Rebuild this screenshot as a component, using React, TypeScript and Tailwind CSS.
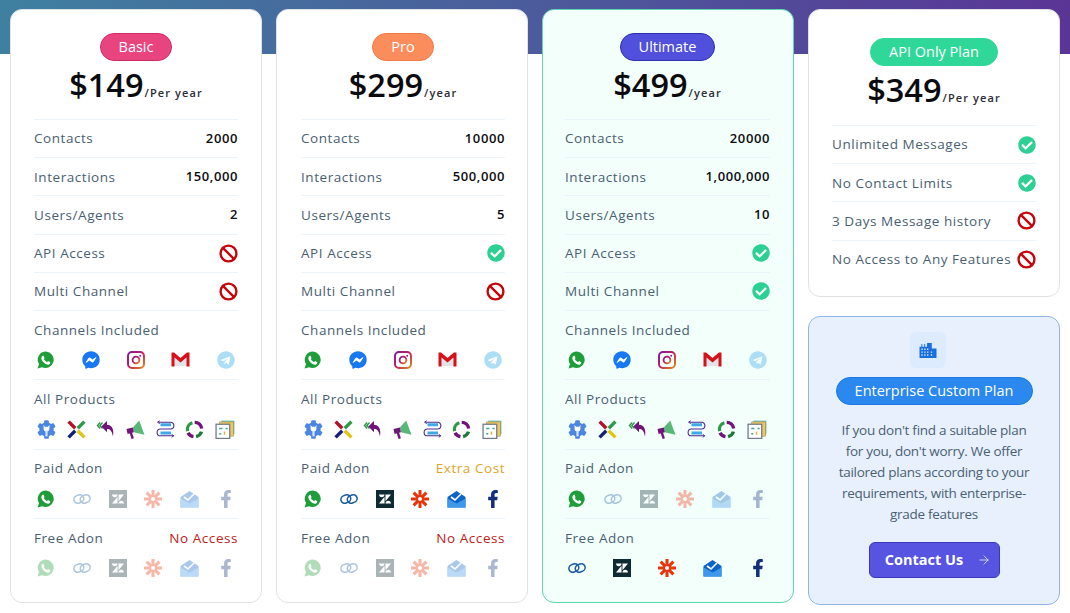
import React from "react";
import { Ban, ArrowRight } from "lucide-react";
import { FaFacebookMessenger, FaTelegram, FaFacebookF, FaCheckCircle } from "react-icons/fa";
import { SiZendesk } from "react-icons/si";

type Row = { label: string; value?: string; state?: "yes" | "no" };

const Yes = () => <FaCheckCircle className="text-[#2dd093] text-[18px]" />;
const No = () => <Ban size={19} strokeWidth={3} className="text-[#c4060c]" />;

const Whatsapp = () => (
  <svg width="18" height="18" viewBox="0 0 18 18">
    <path d="M9 .6a8.2 8.2 0 0 0-7 12.5L.6 17.4l4.4-1.2A8.2 8.2 0 1 0 9 .6z" fill="#1f9d3a" />
    <path d="M6.4 4.6l-1 .3c-.8.6-1.2 1.6-1 2.9.4 2.4 3.1 5.2 5.8 5.8 1.2.2 2.3-.3 2.9-1.2l.2-1.2-2.3-1.1-.9 1.1c-1.3-.5-2.7-1.8-3.3-3.1l.8-.9-1.2-2.6z" fill="#fff" />
  </svg>
);
const Messenger = () => <FaFacebookMessenger className="text-[#1877f2] text-[18px]" />;
const Instagram = () => (
  <svg width="18" height="18" viewBox="0 0 18 18" fill="none">
    <defs>
      <linearGradient id="ig" x1="0" y1="0" x2="1" y2="1">
        <stop offset="0" stopColor="#7a1fa0" />
        <stop offset="0.5" stopColor="#c02060" />
        <stop offset="1" stopColor="#e09020" />
      </linearGradient>
    </defs>
    <rect x="1" y="1" width="16" height="16" rx="4" stroke="url(#ig)" strokeWidth="2" />
    <circle cx="9" cy="9" r="3.4" stroke="url(#ig)" strokeWidth="1.8" />
    <circle cx="13.2" cy="4.8" r="1" fill="#a02080" />
  </svg>
);
const Gmail = () => (
  <svg width="19" height="15" viewBox="0 0 19 15">
    <path d="M3 5l6.5 5L16 5v9H3z" fill="#e4e4e8" />
    <path d="M0.5 0.5h2.6L9.5 6l6.4-5.5h2.6V14.5h-3V5.6L9.5 10.4 3.5 5.6V14.5h-3z" fill="#d3121a" />
  </svg>
);
const Telegram = () => <FaTelegram className="text-[#aeddf6] text-[18px]" />;

const Gear = () => (
  <svg width="19" height="19" viewBox="0 0 18 18">
    <g fill="#4a86e2">
      <circle cx="9" cy="9" r="6.8" />
      <rect x="6.8" y="0.2" width="4.4" height="17.6" rx="1" />
      <rect x="6.8" y="0.2" width="4.4" height="17.6" rx="1" transform="rotate(60 9 9)" />
      <rect x="6.8" y="0.2" width="4.4" height="17.6" rx="1" transform="rotate(120 9 9)" />
    </g>
    <path d="M6.2 4.8v3.2a2.8 2.8 0 0 0 5.6 0V4.8l-1.4 1.7H7.6z" fill="#fff" />
    <rect x="8" y="10" width="2" height="5.5" fill="#dbe8fb" />
  </svg>
);
const Cross = () => (
  <svg width="19" height="19" viewBox="0 0 18 18" strokeWidth="3.2">
    <path d="M1.5 1.5l6.3 6.3" stroke="#b3102c" />
    <path d="M16.5 1.5l-6.3 6.3" stroke="#2e9a48" />
    <path d="M1.5 16.5l6.3-6.3" stroke="#141f78" />
    <path d="M16.5 16.5l-6.3-6.3" stroke="#e2c414" />
  </svg>
);
const Reply = () => (
  <svg width="19" height="18" viewBox="0 0 18 18">
    <path d="M3.6 2.5L1 5.5l2.6 3M6 2.5L3.4 5.5 6 8.5" fill="none" stroke="#2e9a48" strokeWidth="1.4" />
    <path d="M10.5 1L4.8 6.6l5.7 5.6V9c3 0 4.8 1.6 6 7.5 1.2-6.5-.6-11.7-6-11.7z" fill="#70147c" />
  </svg>
);
const Megaphone = () => (
  <svg width="19" height="19" viewBox="0 0 18 18">
    <path d="M12.5 0.5l5 13.5-10-2.5-1-4.5z" fill="#58b878" />
    <path d="M0.5 8.5l6-1.5 1 4.5-6 1.8z" fill="#70147c" />
    <path d="M3.5 12.5l2.2-.6 1.8 5.4-2.2.6z" fill="#70147c" />
  </svg>
);
const Flow = () => (
  <svg width="19" height="18" viewBox="0 0 18 18" fill="none">
    <path d="M4 4.8h10.5M4 13h10.5" stroke="#41a8e6" strokeWidth="3" />
    <path d="M2 2.2H14a3.4 3.4 0 0 1 0 6.8H4a3.4 3.4 0 0 0 0 6.8h12.5" stroke="#4e2a90" strokeWidth="1.1" />
    <path d="M3.2 0.8L1 2.2l2.2 1.4M15.2 14.4l2.2 1.4-2.2 1.4" stroke="#4e2a90" strokeWidth="1" />
  </svg>
);
const Cycle = () => (
  <svg width="19" height="19" viewBox="0 0 18 18" fill="none" strokeWidth="3.2">
    <path d="M2.4 10.5A6.8 6.8 0 0 1 7 2.6" stroke="#2e9a48" />
    <path d="M9.2 2.2A6.8 6.8 0 0 1 15.8 8" stroke="#70147c" />
    <path d="M15.6 11A6.8 6.8 0 0 1 10.5 15.7" stroke="#1d7a3a" />
    <path d="M8 15.8A6.8 6.8 0 0 1 2.9 12" stroke="#70147c" />
  </svg>
);
const Stack = () => (
  <svg width="20" height="19" viewBox="0 0 19 18">
    <rect x="6" y="0.5" width="12.5" height="13" fill="#7fc8b8" />
    <rect x="4.5" y="1.8" width="13" height="13.5" fill="#f0c860" stroke="#8a7a40" strokeWidth="0.5" />
    <rect x="1" y="4" width="13" height="13.5" fill="#fff" stroke="#70788a" strokeWidth="1.2" />
    <path d="M4 8h3M10 8h2M4 13h2" stroke="#38a8a0" strokeWidth="1.4" />
    <path d="M9 11v3" stroke="#d8b830" strokeWidth="1.4" />
  </svg>
);

const Zoho = () => (
  <svg width="18" height="18" viewBox="0 0 18 18" fill="none" stroke="#1c5c9c" strokeWidth="1.5">
    <rect x="0.8" y="5.2" width="10" height="7.6" rx="3.8" transform="rotate(-22 5.8 9)" />
    <rect x="7.2" y="5.2" width="10" height="7.6" rx="3.8" transform="rotate(-22 12.2 9)" />
  </svg>
);
const Zendesk = () => (
  <span className="flex h-[18px] w-[18px] items-center justify-center bg-[#0f2a33]">
    <SiZendesk className="text-white text-[12px]" />
  </span>
);
const Zapier = () => (
  <svg width="18" height="18" viewBox="0 0 18 18" stroke="#e8340a" strokeWidth="3">
    <path d="M9 0v5.5M9 12.5V18M0 9h5.5M12.5 9H18M2.6 2.6l4 4M11.4 11.4l4 4M15.4 2.6l-4 4M6.6 11.4l-4 4" />
    <circle cx="9" cy="9" r="3" fill="none" strokeWidth="2" />
  </svg>
);
const Mail = () => (
  <svg width="19" height="18" viewBox="0 0 19 18">
    <path d="M0.5 7L9.5 1l9 6v10.5H0.5z" fill="#0c63c8" />
    <path d="M4 7l4 3 6-6" fill="none" stroke="#fff" strokeWidth="1.6" />
    <path d="M0.5 8.5l9 5 9-5v9H0.5z" fill="#3f97ea" />
  </svg>
);
const Facebook = () => <FaFacebookF className="text-[#12307a] text-[18px]" />;

const channels = [Whatsapp, Messenger, Instagram, Gmail, Telegram];
const products = [Gear, Cross, Reply, Megaphone, Flow, Cycle, Stack];
const adons = [Whatsapp, Zoho, Zendesk, Zapier, Mail, Facebook];

const Plan = ({ name, badge, price, per, rows, paidNote, paidOn, freeNote, freeIcons, freeOn, card }: {
  name: string;
  badge: string;
  price: string;
  per: string;
  rows: Row[];
  paidNote?: string;
  paidOn: boolean[];
  freeNote?: string;
  freeIcons: React.FC[];
  freeOn: boolean;
  card: string;
}) => (
  <div className={"h-[594px] rounded-xl border pt-[23px] " + card}>
    <Head name={name} badge={badge} price={price} per={per} />
    <div className="h-[12px]" />
    {rows.map((r) => <PlanRow key={r.label} row={r} />)}
    <Block label="Channels Included" icons={channels} />
    <Block label="All Products" icons={products} />
    <Block label="Paid Adon" note={paidNote} noteClass="text-[#e0a526]" icons={adons} on={paidOn} />
    <Block label="Free Adon" note={freeNote} noteClass="text-[#c0201a]" icons={freeIcons} on={freeIcons.map(() => freeOn)} last />
  </div>
);

const Head = ({ name, badge, price, per }: { name: string; badge: string; price: string; per: string }) => (
  <div className="flex flex-col items-center">
    <span className={"flex h-[28px] items-center rounded-full border px-[18px] text-[14.5px] font-medium text-white " + badge}>{name}</span>
    <div className="mt-px flex h-[45px] items-baseline text-[#0b0b0f]">
      <span className="text-[32.5px] font-[550] leading-[45px]">{price}</span>
      <span className="ml-px text-[11px] font-semibold tracking-[1.1px] text-[#2c2c34]">{per}</span>
    </div>
  </div>
);

const PlanRow = ({ row }: { row: Row }) => (
  <div className="flex h-[38.2px] items-center justify-between border-t border-[#ebf4fb]">
    <span className="text-[13.5px] tracking-[0.55px] text-[#4a6072]">{row.label}</span>
    {row.value && <span className="text-[13px] font-semibold tracking-[0.6px] text-[#0b0b0f]">{row.value}</span>}
    {row.state === "yes" && <Yes />}
    {row.state === "no" && <No />}
  </div>
);

const Block = ({ label, note, noteClass, icons, on, last }: {
  label: string;
  note?: string;
  noteClass?: string;
  icons: React.FC[];
  on?: boolean[];
  last?: boolean;
}) => (
  <div className={"border-t border-[#ebf4fb] pt-[9px] " + (last ? "" : "h-[69.3px]")}>
    <div className="flex h-[20px] items-center justify-between text-[13.5px] tracking-[0.55px]">
      <span className="text-[#4a6072]">{label}</span>
      {note && <span className={noteClass}>{note}</span>}
    </div>
    <div className="mt-[11px] flex h-[18px] items-center justify-between px-[3px]">
      {icons.map((Icon, i) => (
        <span key={i} className={on && !on[i] ? "opacity-35" : ""}>
          <Icon />
        </span>
      ))}
    </div>
  </div>
);

const basicRows: Row[] = [
  { label: "Contacts", value: "2000" },
  { label: "Interactions", value: "150,000" },
  { label: "Users/Agents", value: "2" },
  { label: "API Access", state: "no" },
  { label: "Multi Channel", state: "no" },
];
const proRows: Row[] = [
  { label: "Contacts", value: "10000" },
  { label: "Interactions", value: "500,000" },
  { label: "Users/Agents", value: "5" },
  { label: "API Access", state: "yes" },
  { label: "Multi Channel", state: "no" },
];
const ultimateRows: Row[] = [
  { label: "Contacts", value: "20000" },
  { label: "Interactions", value: "1,000,000" },
  { label: "Users/Agents", value: "10" },
  { label: "API Access", state: "yes" },
  { label: "Multi Channel", state: "yes" },
];
const apiRows: Row[] = [
  { label: "Unlimited Messages", state: "yes" },
  { label: "No Contact Limits", state: "yes" },
  { label: "3 Days Message history", state: "no" },
  { label: "No Access to Any Features", state: "no" },
];

const first = [true, false, false, false, false, false];
const all = [true, true, true, true, true, true];

export default function App() {
  return (
    <div className="h-[613px] overflow-hidden bg-white bg-[linear-gradient(90deg,#3f80a0,#4a5f9c_45%,#5a3596)] bg-size-[100%_54px] bg-no-repeat font-['Open_Sans',sans-serif]">
      <div className="grid grid-cols-4 gap-[14px] px-[10px] pt-[9px]">
        <Plan
          name="Basic"
          badge="bg-[#e8457f] border-[#d02c68]"
          price="$149"
          per="/Per year"
          rows={basicRows}
          paidOn={first}
          freeNote="No Access"
          freeIcons={adons}
          freeOn={false}
          card="bg-white border-[#e0e2e6] px-[23px]"
        />
        <Plan
          name="Pro"
          badge="bg-[#fb8d5c] border-[#f07a46]"
          price="$299"
          per="/year"
          rows={proRows}
          paidNote="Extra Cost"
          paidOn={all}
          freeNote="No Access"
          freeIcons={adons}
          freeOn={false}
          card="bg-white border-[#e0e2e6] pl-[24px] pr-[22px]"
        />
        <Plan
          name="Ultimate"
          badge="bg-[#5050dc] border-[#2f2fb0]"
          price="$499"
          per="/year"
          rows={ultimateRows}
          paidOn={first}
          freeIcons={adons.slice(1)}
          freeOn={true}
          card="bg-[#f2fffb] border-[#5ed6b2] pl-[22px] pr-[23px]"
        />
        <div className="flex flex-col gap-[19px]">
          <div className="h-[288px] rounded-xl border border-[#e0e2e6] bg-white px-[23px] pt-[28px]">
            <Head name="API Only Plan" badge="bg-[#2fd899] border-[#2fd899]" price="$349" per="/Per year" />
            <div className="h-[13px]" />
            {apiRows.map((r) => <PlanRow key={r.label} row={r} />)}
          </div>
          <div className="flex h-[289px] flex-col items-center rounded-xl border border-[#8db6e6] bg-[#e8f0fe] px-[20px] pt-[15px]">
            <div className="mr-[12px] flex h-[36px] w-[36px] items-center justify-center rounded-md bg-[#dcebfd]">
              <svg width="20" height="17" viewBox="0 0 20 18" fill="#1a6fe0">
                <path d="M1 5h2V2h1v3h2V2h1v3h2V1h5v6h5v10H1z" />
                <path d="M3 7h1.4v1.5H3zM6 7h1.4v1.5H6zM9 7h1.4v1.5H9zM3 10h1.4v1.5H3zM6 10h1.4v1.5H6zM9 10h1.4v1.5H9zM3 13h1.4v1.5H3zM6 13h1.4v1.5H6zM9 13h1.4v1.5H9zM13 10h1.4v1.5H13zM13 13h1.4v1.5H13z" fill="#dcebfd" />
              </svg>
            </div>
            <span className="mt-[9px] flex h-[28px] w-[197px] items-center justify-center rounded-full border border-[#1a78e0] bg-[#2b88ee] text-[14.5px] font-medium text-white">
              Enterprise Custom Plan
            </span>
            <p className="mt-[15px] w-[200px] text-center text-[13.5px] leading-[21px] tracking-[-0.28px] text-[#4a6072]">
              If you don't find a suitable plan for you, don't worry. We offer tailored plans according to your requirements, with enterprise-grade features
            </p>
            <button className="mt-[17px] flex h-[36px] w-[131px] items-center justify-center gap-[14px] rounded-md border border-[#3a38b8] bg-[#5654e0] pl-[8px] text-[14.5px] font-bold text-white">
              Contact Us
              <ArrowRight size={14} strokeWidth={1.25} />
            </button>
          </div>
        </div>
      </div>
    </div>
  );
}
